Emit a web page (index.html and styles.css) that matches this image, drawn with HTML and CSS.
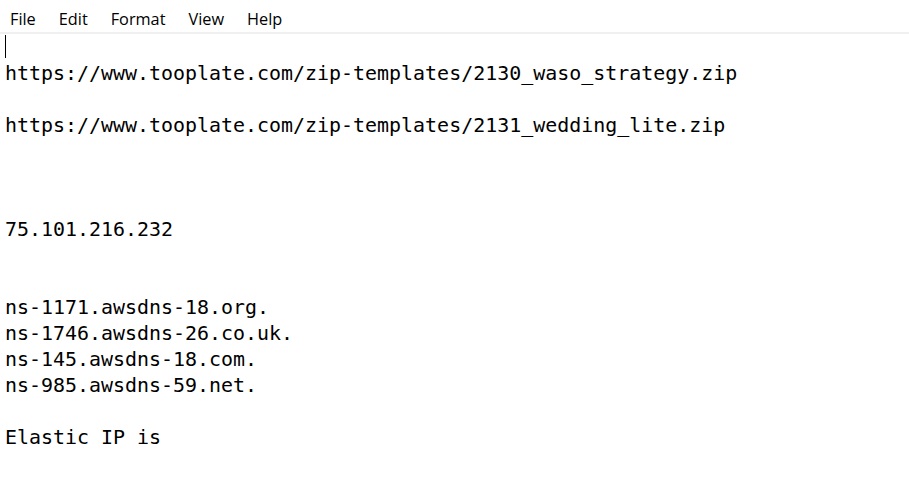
FILE: index.html
```html
<!DOCTYPE html>
<html>
<head>
<meta charset="utf-8">
<link rel="stylesheet" href="styles.css">
</head>
<body>
<div class="window">
  <nav class="menubar">
    <span class="menu-item">File</span>
    <span class="menu-item">Edit</span>
    <span class="menu-item">Format</span>
    <span class="menu-item">View</span>
    <span class="menu-item">Help</span>
  </nav>
  <div class="editor">
    <div class="line"><span class="caret"></span></div>
    <div class="line">https://www.tooplate.com/zip-templates/2130_waso_strategy.zip</div>
    <div class="line"></div>
    <div class="line">https://www.tooplate.com/zip-templates/2131_wedding_lite.zip</div>
    <div class="line"></div>
    <div class="line"></div>
    <div class="line"></div>
    <div class="line">75.101.216.232</div>
    <div class="line"></div>
    <div class="line"></div>
    <div class="line">ns-1171.awsdns-18.org.</div>
    <div class="line">ns-1746.awsdns-26.co.uk.</div>
    <div class="line">ns-145.awsdns-18.com.</div>
    <div class="line">ns-985.awsdns-59.net.</div>
    <div class="line"></div>
    <div class="line">Elastic IP is</div>
  </div>
</div>
</body>
</html>
```
FILE: styles.css
```css
html, body {
  margin: 0;
  padding: 0;
  background: #ffffff;
}
.window {
  width: 909px;
  height: 503px;
  overflow: hidden;
  background: #ffffff;
}
.menubar {
  display: flex;
  align-items: center;
  height: 34px;
  border-bottom: 2px solid #f0f0f0;
  padding-left: 10px;
  font-family: "Open Sans", "Noto Sans", sans-serif;
  font-size: 16.3px;
  color: #000000;
  box-sizing: border-box;
}
.menu-item {
  margin-right: 23px;
  line-height: 20px;
  padding-top: 6px;
}
.editor {
  padding-left: 5px;
  font-family: "DejaVu Sans Mono", "Liberation Mono", monospace;
  font-size: 19.95px;
  line-height: 26px;
  color: #000000;
}
.line {
  height: 26px;
  white-space: pre;
}
.caret {
  display: inline-block;
  width: 1px;
  height: 23px;
  background: #000000;
  vertical-align: top;
  margin-top: 1px;
}
```
